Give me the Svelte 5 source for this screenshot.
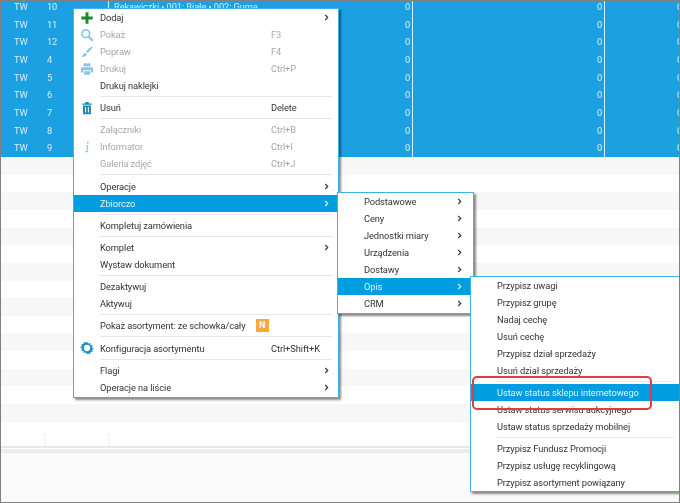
<script>
  const selected = [
    ['TW', '10', 'Rękawiczki • 001: Białe • 002: Guma'],
    ['TW', '11'], ['TW', '12'], ['TW', '4'], ['TW', '5'],
    ['TW', '6'], ['TW', '7'], ['TW', '8'], ['TW', '9']
  ];
  const stripes = Array.from({ length: 16 }, (_, i) => i);

  const mainMenu = [
    { t: 'Dodaj', arrow: true, icon: 'plus' },
    { t: 'Pokaż', key: 'F3', off: true, icon: 'search' },
    { t: 'Popraw', key: 'F4', off: true, icon: 'brush' },
    { t: 'Drukuj', key: 'Ctrl+P', off: true, icon: 'print' },
    { t: 'Drukuj naklejki' },
    { sep: true },
    { t: 'Usuń', key: 'Delete', icon: 'trash' },
    { sep: true },
    { t: 'Załączniki', key: 'Ctrl+B', off: true },
    { t: 'Informator', key: 'Ctrl+I', off: true, icon: 'info' },
    { t: 'Galeria zdjęć', key: 'Ctrl+J', off: true },
    { sep: true },
    { t: 'Operacje', arrow: true },
    { t: 'Zbiorczo', arrow: true, hl: true },
    { sep: true },
    { t: 'Kompletuj zamówienia' },
    { sep: true },
    { t: 'Komplet', arrow: true },
    { t: 'Wystaw dokument' },
    { sep: true },
    { t: 'Dezaktywuj' },
    { t: 'Aktywuj' },
    { sep: true },
    { t: 'Pokaż asortyment: ze schowka/cały', badge: 'N' },
    { sep: true },
    { t: 'Konfiguracja asortymentu', key: 'Ctrl+Shift+K', icon: 'gear' },
    { sep: true },
    { t: 'Flagi', arrow: true },
    { t: 'Operacje na liście', arrow: true }
  ];
  const subMenu = [
    { t: 'Podstawowe', arrow: true },
    { t: 'Ceny', arrow: true },
    { t: 'Jednostki miary', arrow: true },
    { t: 'Urządzenia', arrow: true },
    { t: 'Dostawy', arrow: true },
    { t: 'Opis', arrow: true, hl: true },
    { t: 'CRM', arrow: true }
  ];
  const opisMenu = [
    { t: 'Przypisz uwagi' },
    { t: 'Przypisz grupę' },
    { t: 'Nadaj cechę' },
    { t: 'Usuń cechę' },
    { t: 'Przypisz dział sprzedaży' },
    { t: 'Usuń dział sprzedaży' },
    { sep: true },
    { t: 'Ustaw status sklepu internetowego', hl: true },
    { t: 'Ustaw status serwisu aukcyjnego' },
    { t: 'Ustaw status sprzedaży mobilnej' },
    { sep: true },
    { t: 'Przypisz Fundusz Promocji' },
    { t: 'Przypisz usługę recyklingową' },
    { t: 'Przypisz asortyment powiązany' }
  ];
</script>

{#snippet icon(name)}
  <svg class="ico" viewBox="0 0 16 16" width="14" height="14">
    {#if name === 'plus'}
      <path d="M6.300 1.500h3.400v4.800h4.800v3.400H9.700v4.800H6.300V9.700H1.500V6.300h4.800z" fill="#1e8a2c" />
    {:else if name === 'search'}
      <circle cx="6.600" cy="6.600" r="4.400" fill="none" stroke="#8cc6e2" stroke-width="2" />
      <path d="M10 10l4.500 4.500" stroke="#8cc6e2" stroke-width="2.600" />
    {:else if name === 'brush'}
      <path d="M14.500 1.500c-3 1-6 3.600-7.600 6l1.800 1.600c2.400-1.800 4.800-4.600 5.800-7.600z" fill="#8cc6e2" />
      <path d="M6 8.800c-2 .4-2 2.600-4.500 5 3 .2 5.600-.6 6.200-3.400z" fill="#8cc6e2" />
    {:else if name === 'print'}
      <path d="M4 1.500h8v3.500H4z" fill="#8cc6e2" />
      <path d="M2.500 6h11A1.500 1.500 0 0 1 15 7.500V12h-2.500V9.500h-9V12H1V7.500A1.500 1.500 0 0 1 2.500 6z" fill="#8cc6e2" />
      <path d="M4.500 10.500h7v4h-7z" fill="#8cc6e2" />
    {:else if name === 'trash'}
      <path d="M2.500 2.800h11v1.600h-11zM6 1.200h4v1.600H6z" fill="#1b86b8" />
      <path d="M3.500 5.200h9V15h-9zM5.800 6.800v6.400h1.200V6.800zM9 6.800v6.400h1.200V6.800z" fill="#1b86b8" fill-rule="evenodd" />
    {:else if name === 'info'}
      <path d="M8.100 2h2l-.4 2H7.700zM7.400 5.600h2.100L8.500 12.600h1l-.3 1.400H6.200l.3-1.400h.7l.8-5.600h-.8z" fill="#8cc6e2" />
    {:else if name === 'gear'}
      <path d="M8 .8l1.300 2 2.300-.6.500 2.300 2.300.5-.6 2.300 2 1.300-2 1.300.6 2.300-2.300.5-.5 2.300-2.300-.6L8 15.200l-1.300-2-2.300.6-.5-2.300-2.300-.5.6-2.300-2-1.300 2-1.300-.6-2.300 2.300-.5.5-2.300 2.300.6z" fill="#1b8fc6" />
      <circle cx="8" cy="8" r="3.600" fill="#fff" />
    {/if}
  </svg>
{/snippet}

{#snippet menu(items, cls)}
  <div class="menu {cls}">
    {#each items as it}
      {#if it.sep}
        <div class="sep"></div>
      {:else}
        <div class="item" class:hl={it.hl} class:off={it.off}>
          <span class="gutter">{#if it.icon}{@render icon(it.icon)}{/if}</span>
          <span class="label">{it.t}</span>
          {#if it.badge}<span class="badge">{it.badge}</span>{/if}
          {#if it.key}<span class="key">{it.key}</span>{/if}
          {#if it.arrow}
            <svg class="arrow" viewBox="0 0 6 8" width="5" height="7">
              <path d="M1.500 1l3 3-3 3" fill="none" stroke="currentColor" stroke-width="1.300" />
            </svg>
          {/if}
        </div>
      {/if}
    {/each}
  </div>
{/snippet}

<div class="window">
  <div class="grid">
    <div class="rows">
      {#each selected as r}
        <div class="row sel">
          <span class="c1">{r[0]}</span>
          <span class="c2">{r[1]}</span>
          <span class="c3"><span>{r[2] ?? ''}</span><span>0</span></span>
          <span class="c5">0</span>
          <span class="c6">0</span>
        </div>
      {/each}
      {#each stripes as i}
        <div class="row" class:alt={i % 2 === 0}></div>
      {/each}
    </div>
    <div class="grid-end">
      <span class="tick t1"></span>
      <span class="tick t2"></span>
    </div>
  </div>
  <div class="footer"></div>

  {@render menu(mainMenu, 'main')}
  {@render menu(subMenu, 'sub')}
  {@render menu(opisMenu, 'opis')}
  <div class="mark"></div>
</div>

<style>
  :global(body) { margin: 0; }
  .window {
    position: relative;
    width: 680px;
    height: 503px;
    box-sizing: border-box;
    display: flex;
    flex-direction: column;
    overflow: hidden;
    background: #fff;
    border: 1px solid #808080;
    border-bottom-width: 1.500px;
    font: 9.300px/17px Roboto, sans-serif;
    letter-spacing: -.1px;
    color: #333;
    filter: blur(.3px);
  }
  .grid { flex: none; height: 445px; display: flex; flex-direction: column; }
  .rows { margin-top: -3px; height: 435px; flex: none; overflow: hidden; }
  .row { display: flex; height: 17.670px; line-height: 17.670px; }
  .row.alt { background: #f7f7f7; }
  .sel { background: #1ba1e2; color: #d3eefb; }
  .c1 { width: 43px; padding-left: 13px; box-sizing: border-box; }
  .c2 { width: 64px; padding-left: 3px; box-sizing: border-box; }
  .c3 {
    flex: none;
    width: 304px;
    padding: 0 2px 0 5px;
    box-sizing: border-box;
    border-left: 1px solid #d9effa;
    white-space: nowrap;
    display: flex;
    justify-content: space-between;
  }
  .c5 { flex: none; width: 192px; padding-right: 2px; box-sizing: border-box; text-align: right; border-left: 1px solid #d9effa; }
  .c6 { flex: none; width: 75px; padding-left: 72px; box-sizing: border-box; border-left: 1px solid #d9effa; white-space: nowrap; overflow: hidden; }
  .grid-end { flex: 1; display: flex; background: #fff; padding-left: 43px; }
  .tick { width: 64px; height: 100%; box-sizing: border-box; border-left: 1px dashed #ececec; }
  .footer {
    flex: 1;
    background: #fafafa;
    border-top: 2px solid #e8e8e8;
    box-shadow: inset 0 1px 0 #fff, inset 0 5px 0 #ececec;
  }
  .menu {
    position: absolute;
    box-sizing: border-box;
    background: #fff;
    border: 1px solid #3fb2e8;
    box-shadow: 2px 2px 2px rgba(0, 0, 0, .45);
    color: #333;
  }
  .main { left: 72px; top: 7px; width: 266px; height: 390px; }
  .sub { left: 336px; top: 191px; width: 137px; height: 122px; }
  .opis { left: 469px; top: 275px; width: 214px; height: 216px; }
  .item { display: flex; align-items: center; height: 17px; line-height: 17px; white-space: nowrap; }
  .item.off { color: #a8a8a8; }
  .item.hl { background: #009ee0; color: #dff3fc; }
  .gutter { flex: none; width: 26px; display: flex; justify-content: center; align-items: center; }
  .label { flex: none; }
  .key { position: absolute; left: 197px; }
  .badge {
    margin-left: 10px;
    width: 13px;
    height: 13px;
    background: #f9a93a;
    color: #fff;
    font-weight: 700;
    font-size: 9px;
    line-height: 13px;
    text-align: center;
  }
  .arrow { margin-left: auto; margin-right: 9px; flex: none; }
  .sub .arrow { margin-right: 11px; }
  .sep { height: 1px; margin: 2px 6px 2.200px 26px; background: #e6e6e6; }
  .opis .sep { margin-right: 9px; }
  .mark {
    position: absolute;
    left: 471px;
    top: 375px;
    width: 180px;
    height: 34px;
    box-sizing: border-box;
    border: 2px solid #e23b41;
    border-radius: 5px;
  }
  .ico { display: block; }
</style>
